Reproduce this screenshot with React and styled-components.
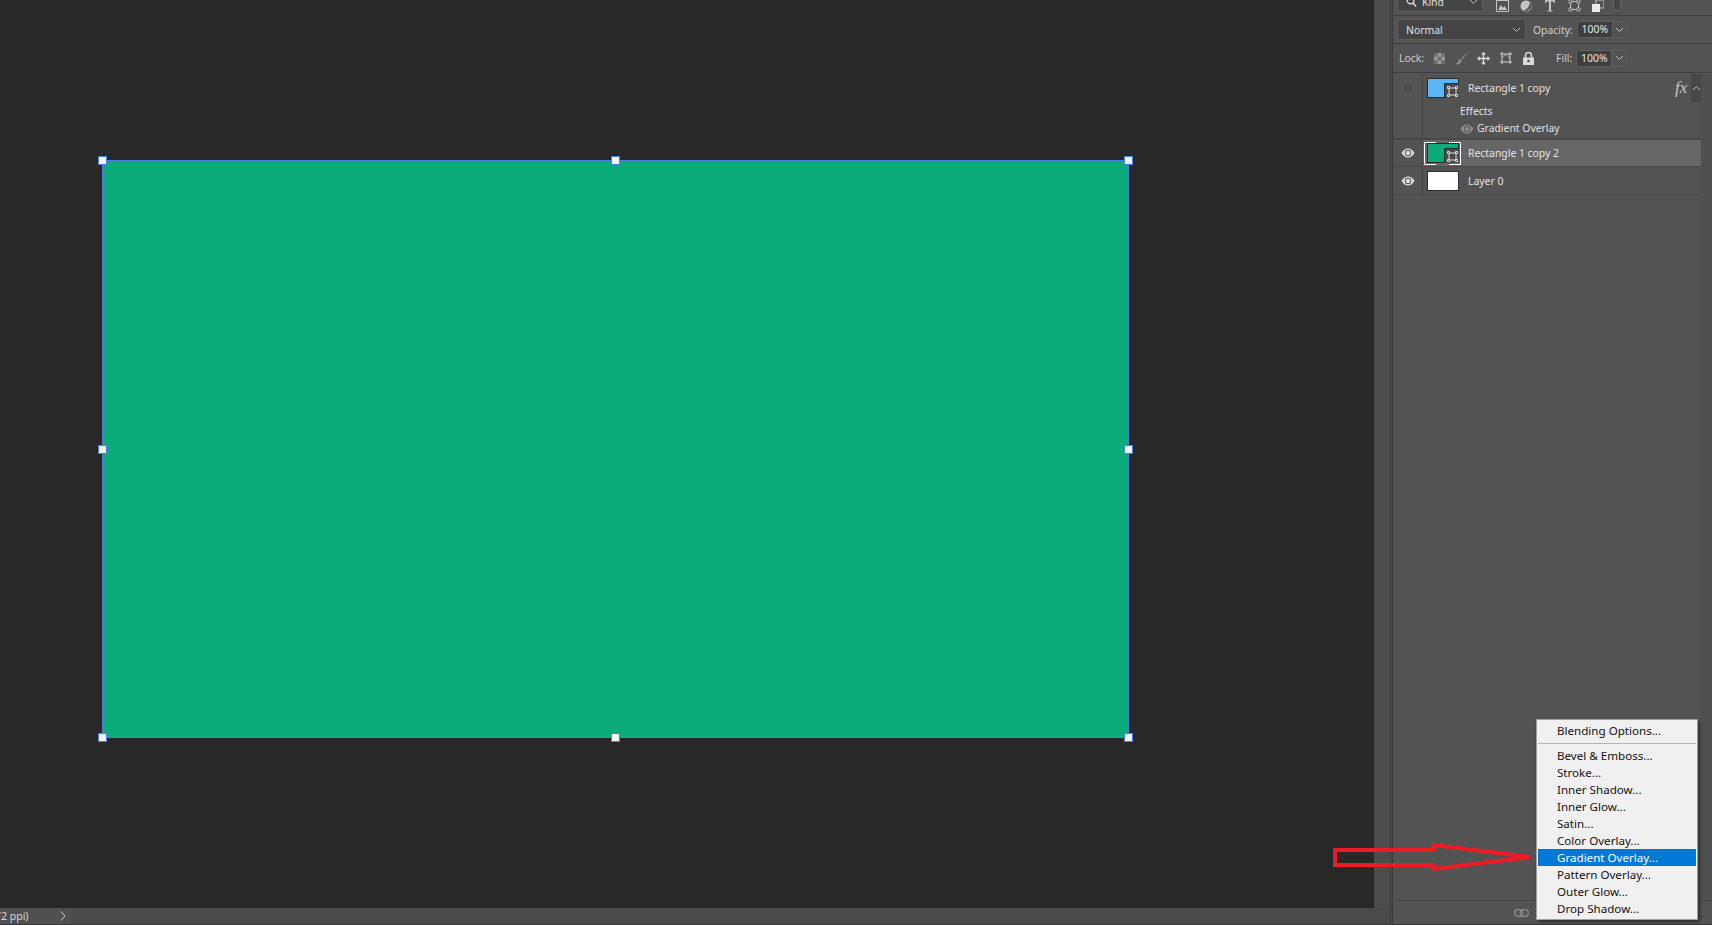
import React from "react";
import styled, { createGlobalStyle } from "styled-components";

const Global = createGlobalStyle`
  html, body { margin: 0; padding: 0; height: 100%; overflow: hidden; background: #282828; }
  #root { height: 925px; }
  * { box-sizing: border-box; }
`;

const UI = `"Noto Sans", "Open Sans", "Liberation Sans", sans-serif`;

const Shell = styled.div`
  position: relative; display: flex; width: 1712px; height: 925px; overflow: hidden;
  font-family: ${UI}; background: #282828;
`;
const Workspace = styled.div`
  width: 1390px; display: flex; flex-direction: column; border-bottom: 1px solid #3a3a3a;
`;
const WorkRow = styled.div`flex: 1; display: flex; min-height: 0;`;
const Canvas = styled.div`flex: 1; background: #282828; padding: 160px 0 0 102px;`;
const CanvasScroll = styled.div`width: 16px; background: #4c4c4c;`;
const Shape = styled.div`
  position: relative; width: 1027px; height: 578px; background: #0bab7c; border: 1px solid #4a7de8;
`;
const Handle = styled.span`
  position: absolute; width: 9px; height: 9px; background: #f4f6fb; border: 1px solid #4a7de8;
  left: ${p => p.$x === 0 ? "-5px" : p.$x === 1 ? "calc(50% - 4.5px)" : "auto"};
  right: ${p => p.$x === 2 ? "-5px" : "auto"};
  top: ${p => p.$y === 0 ? "-5px" : p.$y === 1 ? "calc(50% - 4.5px)" : "auto"};
  bottom: ${p => p.$y === 2 ? "-5px" : "auto"};
`;
const StatusBar = styled.div`
  height: 16px; display: flex; background: #4a4a4a; flex: none;
`;
const StatusInfo = styled.div`
  width: 71px; background: #505050; position: relative; overflow: hidden;
  display: flex; align-items: center; color: #d6d6d6; font-size: 10.5px; white-space: nowrap;
`;
const StatusText = styled.span`margin-left: -5px;`;
const StatusChevron = styled.svg`position: absolute; left: 60px; top: 3px;`;

const Divider = styled.div`
  width: 3px; flex: none; background: #4c4c4c;
  border-left: 1px solid #3b3b3b; border-right: 1px solid #3b3b3b;
`;
const Panel = styled.div`
  flex: 1; min-width: 0; display: flex; flex-direction: column; background: #535353;
  color: #dcdcdc; font-size: 10.4px;
`;
const ToolRow = styled.div`
  display: flex; align-items: center; height: ${p => p.$h}px; padding-left: 4px;
  border-bottom: 1px solid #3f3f3f; flex: none;
`;
const FilterRow = styled(ToolRow)`align-items: flex-end; overflow: hidden; padding-bottom: 3px;`;
const Select = styled.div`
  display: flex; align-items: center; justify-content: space-between; flex: none;
  width: ${p => p.$w}px; height: ${p => p.$h}px; background: #444; border: 1px solid #5f5f5f;
  border-radius: 3px; padding: 0 4px 0 8px; color: #dfe3e8;
`;
const FieldLabel = styled.span`color: #cfcfcf; margin-left: ${p => p.$ml || 0}px; flex: none;`;
const Percent = styled.div`
  display: flex; width: 51px; height: 17px; margin-left: 4px; background: #444;
  border: 1px solid #5f5f5f; border-radius: 3px; flex: none;
`;
const PercentValue = styled.span`
  width: 35px; background: #3e3e3e; text-align: center; line-height: 15px; color: #e8e8e8;
  border-right: 1px solid #5f5f5f; border-radius: 3px 0 0 3px;
`;
const PercentArrow = styled.span`flex: 1; display: flex; align-items: center; justify-content: center; background: #535353; border-radius: 0 3px 3px 0;`;
const IconSlot = styled.span`
  display: flex; align-items: center; justify-content: center; flex: none;
  width: ${p => p.$w}px; margin-left: ${p => p.$ml || 0}px; height: 16px;
`;
const FilterIcons = styled.div`display: flex; align-items: center; height: 12px; overflow: visible;`;
const ToggleSlot = styled.span`
  width: 8px; height: 14px; margin: -4px 0 0 8px; background: #444; border: 1px solid #666; border-radius: 4px; flex: none;
`;

const LayersArea = styled.div`flex: 1; display: flex; min-height: 0; padding-top: 1px;`;
const LayerList = styled.div`width: 308px; flex: none; display: flex; flex-direction: column;`;
const Gutter = styled.div`flex: 1; background: #505050; margin-top: 0;`;
const LayerGroup = styled.div`display: flex; flex-direction: column; border-bottom: 2px solid #474747; position: relative;`;
const LayerRow = styled.div`
  display: flex; height: ${p => p.$h}px; align-items: stretch; border-bottom: ${p => p.$line ? "1px solid #474747" : "0"};
`;
const EyeCell = styled.div`
  width: 30px; flex: none; display: flex; align-items: center; justify-content: center;
  border-right: 1px solid #464646;
`;
const VisBox = styled.span`width: 12px; height: 12px; border: 1px solid #5e5e5e; background: #4f4f4f;`;
const LayerBody = styled.div`
  flex: 1; display: flex; align-items: center; position: relative;
  background: ${p => p.$selected ? "#666" : "transparent"}; padding-left: ${p => p.$pl || 4}px;
`;
const Thumb = styled.div`
  position: relative; width: 32px; height: 20px; flex: none; border: 1px solid #2b2b2b;
  background: ${p => p.$color};
`;
const Badge = styled.span`
  position: absolute; right: -1px; bottom: -1px; width: 15px; height: 15px; background: #4a4a4a;
  border-top: 1px solid #2b2b2b; border-left: 1px solid #2b2b2b; display: flex; align-items: center; justify-content: center;
`;
const SelectCorners = styled.svg`position: absolute; left: 1px; top: 2px;`;
const LayerName = styled.span`margin-left: 9px; color: #e4e4e4; white-space: nowrap;`;
const SubLabel = styled.span`color: #e4e4e4; white-space: nowrap;`;
const EffectName = styled.span`margin-left: 3px; margin-top: -2px; color: #e0e0e0; white-space: nowrap;`;
const Fx = styled.span`
  position: absolute; left: 252px; top: 4px; font: italic 17px "Liberation Serif", serif; color: #c6c6c6;
`;
const Collapse = styled.span`
  position: absolute; right: 0; top: 0; width: 10px; height: 28px; background: #484848;
  display: flex; align-items: center; justify-content: center;
`;
const PanelFooter = styled.div`
  height: 25px; flex: none; border-top: 1px solid #444; display: flex; align-items: center;
  padding-left: 121px; border-bottom: 1px solid #3a3a3a;
`;

const Menu = styled.div`
  position: absolute; left: 1536px; top: 719px; width: 162px; height: 201px; background: #f0f0f0;
  border: 1px solid #a0a0a0; padding: 2px 1px; box-shadow: 2px 2px 3px rgba(0,0,0,.45);
  font-size: 11.6px; color: #111;
`;
const MenuItem = styled.div`
  height: 17px; line-height: 17px; padding-left: 19px; white-space: nowrap;
  background: ${p => p.$active ? "#0078d7" : "transparent"}; color: ${p => p.$active ? "#fff" : "#111"};
`;
const MenuRule = styled.div`height: 1px; background: #b5b5b5; margin: 4px 0 3px;`;
const ArrowOverlay = styled.svg`position: absolute; left: 1330px; top: 840px; pointer-events: none;`;

const Chevron = ({ w = 9, c = "#bdbdbd", d = "M1 1l3.5 3.5L8 1" }) => (
  <svg width={w} height="6" viewBox="0 0 9 6" fill="none"><path d={d} stroke={c} strokeWidth="1" /></svg>
);
const Eye = ({ c = "#dcdcdc" }) => (
  <svg width="14" height="10" viewBox="0 0 14 10">
    <path d="M0.5 5C2.5 1.8 4.7 .6 7 .6s4.5 1.2 6.5 4.4C11.5 8.2 9.3 9.4 7 9.4S2.5 8.2.5 5z" fill={c} />
    <circle cx="7" cy="5" r="3.2" fill="#535353" /><circle cx="7" cy="5" r="2.3" fill={c} />
  </svg>
);
const SmartBadge = () => (
  <Badge>
    <svg width="11" height="11" viewBox="0 0 11 11" fill="none">
      <path d="M2 2h7v7H2z" stroke="#ddd" strokeWidth="1" />
      <path d="M0.5 0.5h2v2h-2zM8.5 0.5h2v2h-2zM0.5 8.5h2v2h-2zM8.5 8.5h2v2h-2z" fill="#4a4a4a" stroke="#ddd" strokeWidth="1" />
    </svg>
  </Badge>
);
const I = { fill: "#c4c4c4" };
const Icons = {
  search: <svg width="11" height="12" viewBox="0 0 11 12" fill="none"><circle cx="4.5" cy="4.5" r="3.3" stroke="#d8d8d8" strokeWidth="1.4"/><path d="M7 7l3 3.5" stroke="#d8d8d8" strokeWidth="1.6"/></svg>,
  image: <svg width="13" height="12" viewBox="0 0 13 12" fill="none"><path d="M.5 .5h12v11H.5z" stroke="#c4c4c4"/><path d="M2 10l3-5 2 3 1.5-2L11 10z" {...I}/></svg>,
  adjust: <svg width="12" height="12" viewBox="0 0 12 12"><circle cx="6" cy="6" r="5.5" {...I}/><path d="M10 2.5A5.5 5.5 0 0 1 3 10.6C7 10 9 7 10 2.5z" fill="#555"/></svg>,
  type: <svg width="12" height="12" viewBox="0 0 12 12"><path d="M1 0h10v3h-1L9.500 1.500H7v9h1.500v1h-5v-1H5v-9H2.500L2 3H1z" {...I}/></svg>,
  shape: <svg width="13" height="12" viewBox="0 0 13 12" fill="none"><path d="M2.500 1.500h8v8h-8z" stroke="#c4c4c4"/><path d="M1 0h3v3H1zM9 0h3v3H9zM1 8h3v3H1zM9 8h3v3H9z" fill="#535353" stroke="#c4c4c4" strokeWidth=".8"/></svg>,
  smart: <svg width="12" height="12" viewBox="0 0 12 12"><path d="M4 0h8v8H4z" fill="none" stroke="#c4c4c4"/><path d="M0 4h8v8H0z" fill="#e8e8e8"/></svg>,
  checker: <svg width="11" height="11" viewBox="0 0 11 11"><path d="M0 0h11v11H0z" fill="#9a9a9a"/><path d="M0 0h3.700v3.700H0zM7.300 0H11v3.700H7.300zM3.700 3.700h3.700v3.700H3.700zM0 7.300h3.700V11H0zM7.300 7.300H11V11H7.300z" fill="#6e6e6e"/></svg>,
  brush: <svg width="13" height="13" viewBox="0 0 13 13"><path d="M12.500 .5L6 6.500l1 1L12.800 1zM5.200 7C3.500 7.300 3.500 9 2.800 10.300 2.300 11.200 1 11.500.5 12.500 3 13 6.500 11.500 6.500 8.500z" fill="#8d8d8d"/></svg>,
  move: <svg width="13" height="13" viewBox="0 0 13 13"><path d="M6.500 0L9 2.600H7.200v3.200h3.200V4L13 6.500 10.400 9V7.200H7.200v3.200H9L6.500 13 4 10.400h1.800V7.200H2.600V9L0 6.500 2.600 4v1.800h3.200V2.600H4z" fill="#dcdcdc"/></svg>,
  crop: <svg width="14" height="14" viewBox="0 0 14 14" fill="none"><path d="M3 3h8v8H3z" stroke="#d0d0d0" transform="translate(0 0)"/><path d="M1 3h2M11 3h2M1 11h2M11 11h2M3 1v2M11 1v2M3 11v2M11 11v2" stroke="#d0d0d0"/><path d="M3 6l5-3 3 5" stroke="#d0d0d0" strokeWidth=".6"/></svg>,
  lock: <svg width="11" height="13" viewBox="0 0 11 13"><path d="M0 5.500h11V13H0z" fill="#dcdcdc"/><path d="M2.500 6V3.500a3 3 0 0 1 6 0V6" fill="none" stroke="#dcdcdc" strokeWidth="1.500"/><circle cx="5.500" cy="9" r="1.300" fill="#535353"/></svg>,
  link: <svg width="15" height="8" viewBox="0 0 15 8" fill="none"><rect x=".7" y=".7" width="8" height="6.600" rx="3.300" stroke="#8f8f8f" strokeWidth="1.300"/><rect x="6.300" y=".7" width="8" height="6.600" rx="3.300" stroke="#8f8f8f" strokeWidth="1.300"/></svg>,
};

const handles = [[0,0],[1,0],[2,0],[0,1],[2,1],[0,2],[1,2],[2,2]];
const menuGroup = ["Bevel & Emboss...","Stroke...","Inner Shadow...","Inner Glow...","Satin...","Color Overlay...","Gradient Overlay...","Pattern Overlay...","Outer Glow...","Drop Shadow..."];

export default function App() {
  return (
    <Shell>
      <Global />
      <Workspace>
        <WorkRow>
          <Canvas>
            <Shape>{handles.map(([x, y]) => <Handle key={`${x}${y}`} $x={x} $y={y} />)}</Shape>
          </Canvas>
          <CanvasScroll />
        </WorkRow>
        <StatusBar>
          <StatusInfo>
            <StatusText>72 ppi)</StatusText>
            <StatusChevron width="6" height="10" viewBox="0 0 6 10" fill="none"><path d="M1 .5L5 5 1 9.500" stroke="#c4c4c4" /></StatusChevron>
          </StatusInfo>
        </StatusBar>
      </Workspace>
      <Divider />
      <Panel>
        <FilterRow $h={16}>
          <Select $w={86} $h={20}>
            <span style={{ display: "flex", alignItems: "center", gap: 5 }}>{Icons.search}Kind</span>
            <Chevron />
          </Select>
          <FilterIcons>
            <IconSlot $w={14} $ml={12}>{Icons.image}</IconSlot>
            <IconSlot $w={14} $ml={10}>{Icons.adjust}</IconSlot>
            <IconSlot $w={14} $ml={10}>{Icons.type}</IconSlot>
            <IconSlot $w={14} $ml={10}>{Icons.shape}</IconSlot>
            <IconSlot $w={14} $ml={10}>{Icons.smart}</IconSlot>
            <ToggleSlot />
          </FilterIcons>
        </FilterRow>
        <ToolRow $h={28}>
          <Select $w={129} $h={21}>Normal<Chevron /></Select>
          <FieldLabel $ml={7}>Opacity:</FieldLabel>
          <Percent><PercentValue>100%</PercentValue><PercentArrow><Chevron /></PercentArrow></Percent>
        </ToolRow>
        <ToolRow $h={29}>
          <FieldLabel $ml={2}>Lock:</FieldLabel>
          <IconSlot $w={12} $ml={9}>{Icons.checker}</IconSlot>
          <IconSlot $w={14} $ml={9}>{Icons.brush}</IconSlot>
          <IconSlot $w={14} $ml={8}>{Icons.move}</IconSlot>
          <IconSlot $w={14} $ml={9}>{Icons.crop}</IconSlot>
          <IconSlot $w={12} $ml={9}>{Icons.lock}</IconSlot>
          <FieldLabel $ml={22}>Fill:</FieldLabel>
          <Percent><PercentValue>100%</PercentValue><PercentArrow><Chevron /></PercentArrow></Percent>
        </ToolRow>
        <LayersArea>
          <LayerList>
            <LayerGroup>
              <LayerRow $h={28}>
                <EyeCell><VisBox /></EyeCell>
                <LayerBody>
                  <Thumb $color="#5cb6f8"><SmartBadge /></Thumb>
                  <LayerName>Rectangle 1 copy</LayerName>
                  <Fx>fx</Fx>
                  <Collapse><Chevron d="M1 5l3.500-3.500L8 5" /></Collapse>
                </LayerBody>
              </LayerRow>
              <LayerRow $h={18}>
                <EyeCell />
                <LayerBody $pl={37}><SubLabel>Effects</SubLabel></LayerBody>
              </LayerRow>
              <LayerRow $h={18}>
                <EyeCell />
                <LayerBody $pl={37}><Eye c="#8d8d8d" /><EffectName>Gradient Overlay</EffectName></LayerBody>
              </LayerRow>
            </LayerGroup>
            <LayerRow $h={27} $line>
              <EyeCell><Eye /></EyeCell>
              <LayerBody $selected>
                <Thumb $color="#0bab7c"><SmartBadge /></Thumb>
                <SelectCorners width="37" height="23" viewBox="0 0 37 23" fill="none">
                  <path d="M12 .5H.5v22H12M25 .5h11.500v22H25" stroke="#fff" />
                </SelectCorners>
                <LayerName>Rectangle 1 copy 2</LayerName>
              </LayerBody>
            </LayerRow>
            <LayerRow $h={28} $line>
              <EyeCell><Eye /></EyeCell>
              <LayerBody>
                <Thumb $color="#fff" />
                <LayerName>Layer 0</LayerName>
              </LayerBody>
            </LayerRow>
          </LayerList>
          <Gutter />
        </LayersArea>
        <PanelFooter>{Icons.link}</PanelFooter>
      </Panel>
      <ArrowOverlay width="206" height="36" viewBox="0 0 206 36" fill="none">
        <path d="M5 10H103V5L200 17 103 29V25H5z" stroke="#ed1c24" strokeWidth="4" strokeLinejoin="miter" />
      </ArrowOverlay>
      <Menu>
        <MenuItem>Blending Options...</MenuItem>
        <MenuRule />
        {menuGroup.map(m => <MenuItem key={m} $active={m === "Gradient Overlay..."}>{m}</MenuItem>)}
      </Menu>
    </Shell>
  );
}
